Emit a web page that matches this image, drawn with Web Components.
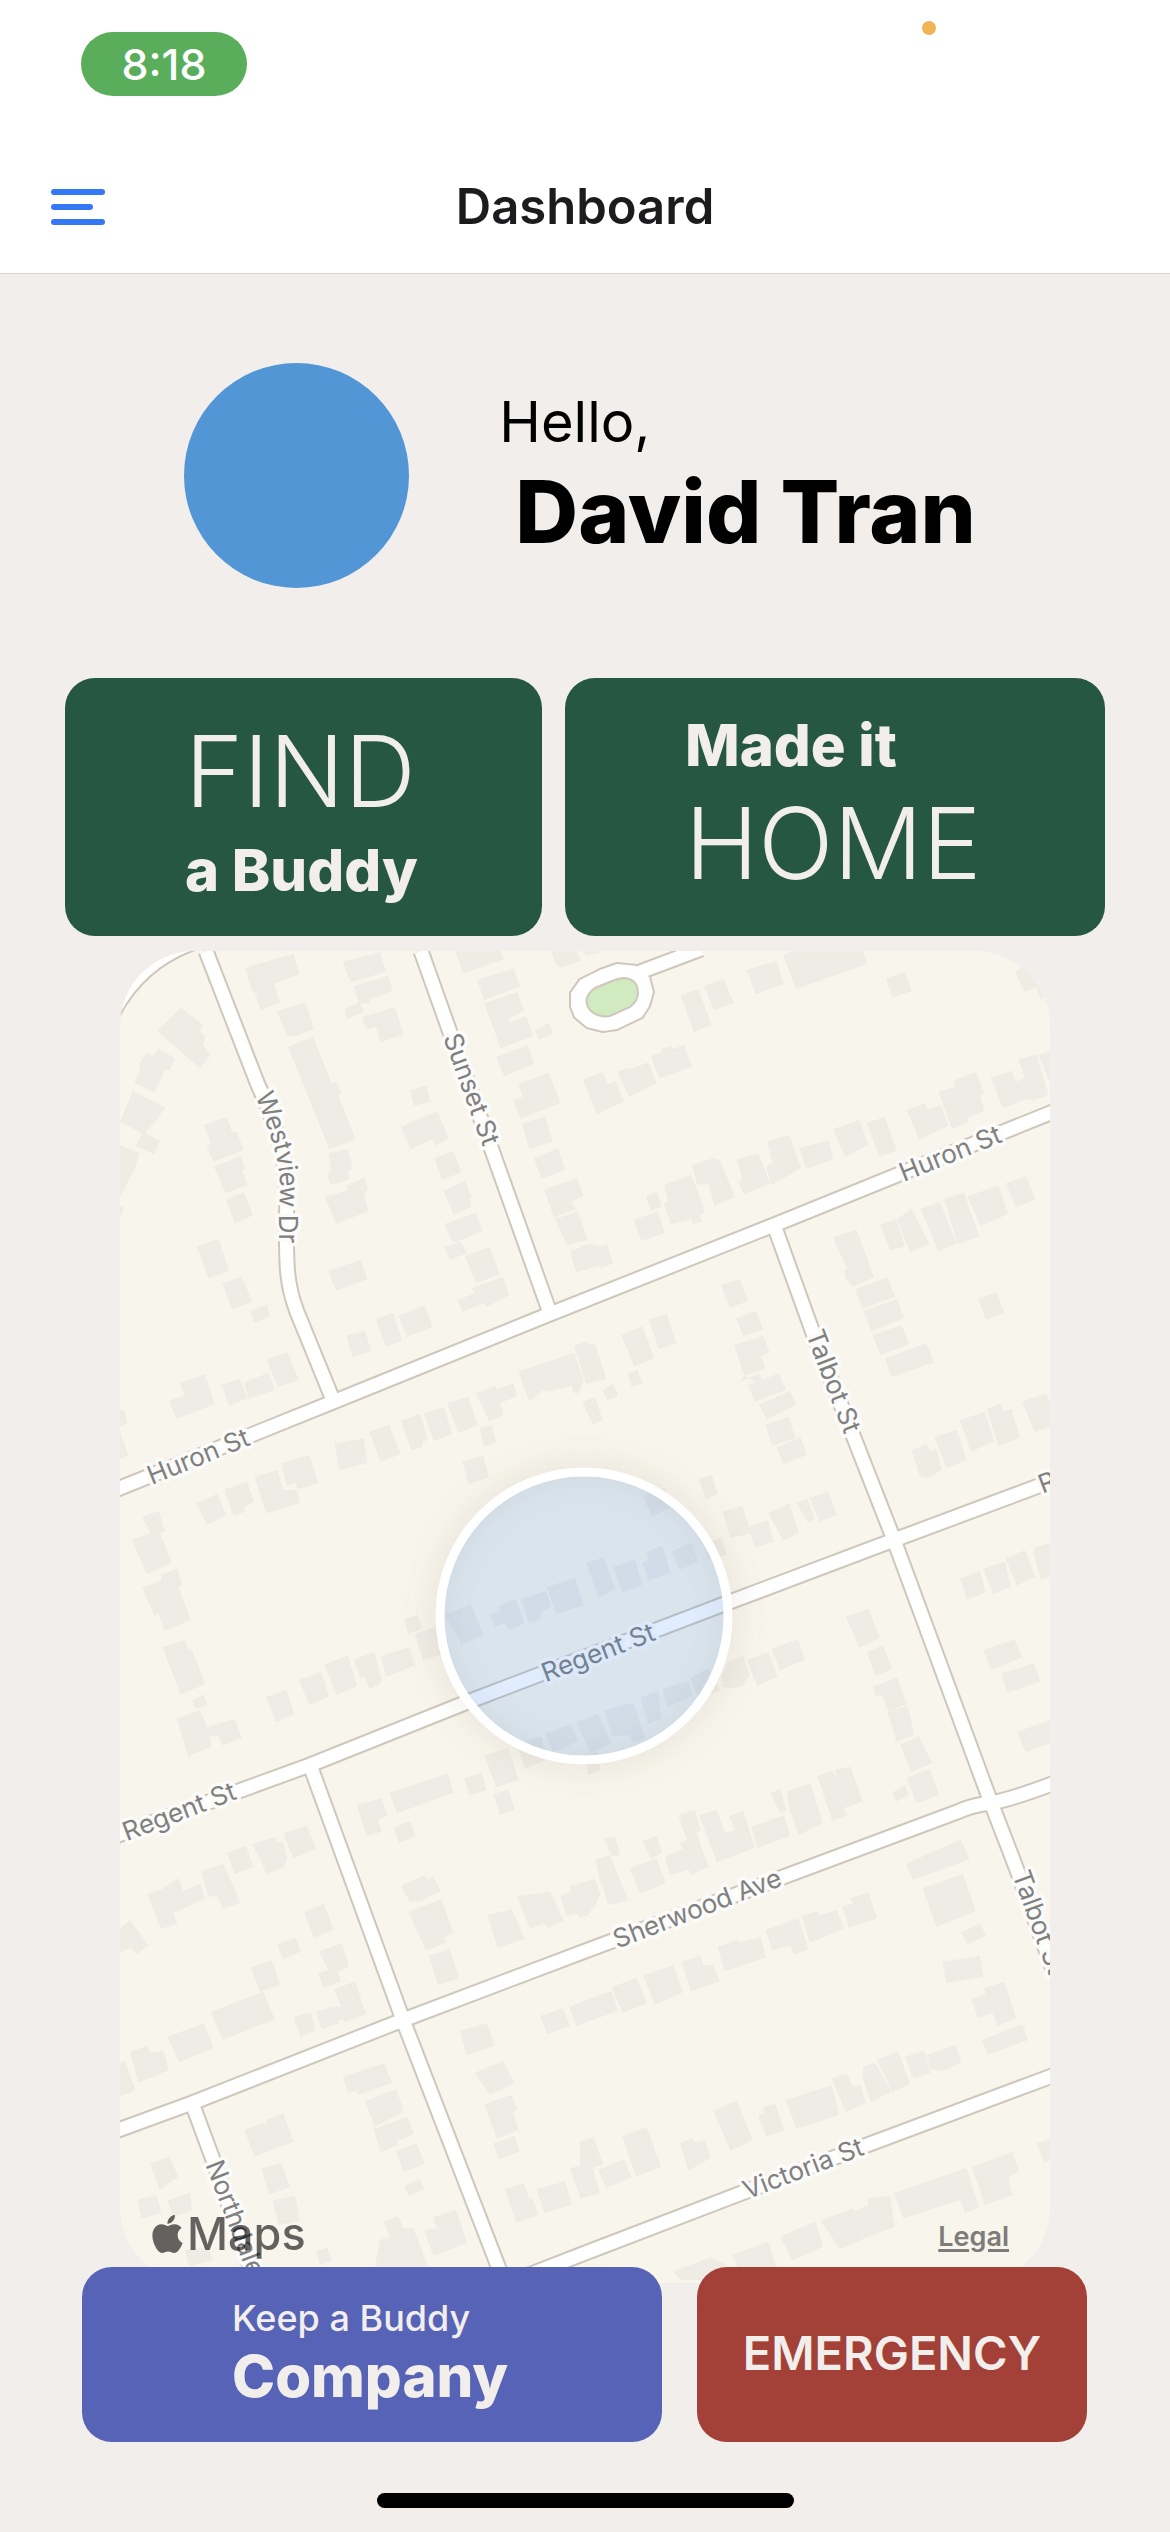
<!DOCTYPE html>
<html lang="en">
<head>
<meta charset="utf-8">
<meta name="viewport" content="width=device-width, initial-scale=1">
<title>Dashboard</title>
<style>
  body {
    margin: 0;
    background: #f1eeeb;
    font-family: Inter, Roboto, "Liberation Sans", sans-serif;
  }
</style>
</head>
<body>
<buddy-dashboard></buddy-dashboard>

<script>
// Status bar with the clock pill and the microphone dot
class StatusBar extends HTMLElement {
  constructor () {
    super()
    this.attachShadow({ mode: 'open' })
  }

  static Styles = /* Css */`
    :host {
      display: flex;
      justify-content: space-between;
      height: 141px;
      padding: 0 234px 0 81px;
    }
    time {
      width: 166px;
      height: 64px;
      margin-top: 32px;
      border-radius: 32px;
      background: #5aae5b;
      color: #fff;
      font-size: 43px;
      line-height: 64px;
      font-weight: 500;
      text-align: center;
    }
    i {
      width: 14px;
      height: 14px;
      margin-top: 21px;
      border-radius: 50%;
      background: #f1b354;
    }
  `

  connectedCallback () {
    this.shadowRoot.innerHTML = /* HTML */`
      <style>${StatusBar.Styles}</style>
      <time><slot></slot></time>
      <i></i>
    `
  }
}

// Title bar with the drawer button
class NavBar extends HTMLElement {
  constructor () {
    super()
    this.attachShadow({ mode: 'open' })
  }

  static Styles = /* Css */`
    :host {
      display: grid;
      grid-template-columns: 1fr auto 1fr;
      align-items: center;
      height: 132px;
      padding: 0 51px;
      border-bottom: 1px solid #d8d8d8;
    }
    button {
      justify-self: start;
      padding: 0;
      border: 0;
      background: none;
    }
    svg {
      display: block;
    }
    h1 {
      margin: 0;
      color: #1c1c1e;
      font-size: 49px;
      line-height: 60px;
      font-weight: 600;
    }
  `

  connectedCallback () {
    this.shadowRoot.innerHTML = /* HTML */`
      <style>${NavBar.Styles}</style>
      <button type="button" aria-label="Menu">
        <svg width="54" height="36" viewBox="0 0 54 36" stroke="#3478f6" stroke-width="6" stroke-linecap="round">
          <path d="M3 3H51M3 18H39M3 33H51"/>
        </svg>
      </button>
      <h1><slot></slot></h1>
    `
  }
}

class UserGreeting extends HTMLElement {
  constructor () {
    super()
    this.attachShadow({ mode: 'open' })
  }

  static Styles = /* Css */`
    :host {
      display: flex;
      justify-content: center;
      align-items: center;
      gap: 90px;
      padding: 89px 70px 90px 60px;
    }
    .avatar {
      width: 225px;
      height: 225px;
      border-radius: 50%;
      background: #5296d5;
    }
    p {
      margin: 0;
      color: #000;
    }
    .hello {
      font-size: 56px;
      line-height: 72px;
    }
    .name {
      padding-left: 16px;
      font-size: 87px;
      line-height: 107px;
      font-weight: 800;
    }
  `

  connectedCallback () {
    this.shadowRoot.innerHTML = /* HTML */`
      <style>${UserGreeting.Styles}</style>
      <div class="avatar"></div>
      <div>
        <p class="hello">Hello,</p>
        <p class="name"><slot></slot></p>
      </div>
    `
  }
}

// Two line button, each line goes in its own slot child
class ActionButton extends HTMLElement {
  constructor () {
    super()
    this.attachShadow({ mode: 'open' })
  }

  static Styles = /* Css */`
    :host {
      display: grid;
    }
    button {
      display: flex;
      flex-direction: column;
      justify-content: center;
      align-items: flex-start;
      padding: 0 0 0 var(--inset, 120px);
      border: 0;
      border-radius: 30px;
      background: var(--tone, #265742);
      color: #f1eeeb;
      font: inherit;
      text-align: left;
      white-space: nowrap;
    }
    :host([centered]) button {
      align-items: center;
      padding: 0 0 4px;
    }
    ::slotted(span) {
      display: block;
    }
    ::slotted(.big) {
      font-size: 99px;
      line-height: 125px;
      font-weight: 350;
    }
    ::slotted(.bold) {
      font-size: 58px;
      line-height: 72px;
      font-weight: 800;
    }
    ::slotted(.small) {
      font-size: 36px;
      line-height: 43px;
      font-weight: 500;
    }
    ::slotted(.alert) {
      font-size: 47px;
      line-height: 56px;
      font-weight: 600;
    }
  `

  connectedCallback () {
    this.shadowRoot.innerHTML = /* HTML */`
      <style>${ActionButton.Styles}</style>
      <button type="button"><slot></slot></button>
    `
  }
}

// Houses, grouped by map tile. Tile units are a third of a map unit.
const TILES = [
  [120, 940, `
    375,83 520,42 538,102 462,132 480,188 422,210 405,160 395,150|668,65 780,37 798,95 692,127|
    700,138 803,108 818,152 750,178 748,192 722,190 732,215 682,236 674,208 716,188|470,213 558,188 581,268 527,288 500,285|
    726,232 825,200 851,283 782,306 768,262 738,268|504,320 580,291 636,432 650,423 665,458 655,465 707,597 628,628|
    112,273 182,203 250,255 240,275 255,288 250,315 273,345 240,385|78,338 100,348 115,326 166,355 150,392 135,390 103,458 43,428 62,385 55,378|
    0,545 38,453 136,502 105,547 74,580 120,602 102,643 48,618 66,580|0,615 60,640 42,690 0,770|0,800 12,802 0,832|
    252,555 320,530 336,576 350,575 372,630 280,666 260,615 272,608|282,680 362,648 375,685 366,690 383,735 316,760|
    317,778 372,757 399,826 345,850|230,918 296,897 328,992 266,1015|306,1030 365,1010 397,1085 337,1108|390,1113 440,1094 452,1130 402,1148|
    625,640 683,626 700,688 684,695 687,720 632,735 621,702 634,695|615,770 685,750 678,737 733,714 745,750 732,760 745,813 648,852|
    625,993 722,959 742,1017 648,1052|768,1137 820,1118 847,1202 797,1220|835,1127 914,1096 938,1160 862,1190|679,1187 735,1172 754,1233 698,1250|
    440,1258 502,1236 537,1320 473,1342|870,450 920,437 931,485 882,498|843,560 952,514 986,595 948,617 938,598 872,627|
    943,655 1000,632 1025,697 967,719|970,752 1035,722 1056,772 1048,778 1055,800 1002,826|973,852 1068,818 1088,872 1000,910|
    972,922 1024,905 1040,940 990,960|1035,948 1108,921 1140,1003 1068,1030|1012,1080 1065,1060 1055,1045 1148,1010 1168,1066 1100,1100 1092,1088 1028,1116|
    1005,33 1140,33 1152,57 1030,100|1292,33 1368,33 1384,62 1325,82 1310,78|1385,33 1440,33 1440,40 1400,46|
    1071,120 1182,85 1200,140 1093,180|1093,190 1192,156 1213,212 1168,235 1170,246 1218,228 1240,288 1142,325|
    1246,270 1286,250 1300,280 1256,299|1128,352 1222,316 1243,370 1153,409|1195,432 1286,398 1322,488 1203,536 1178,480 1208,470|
    1206,550 1275,530 1298,605 1228,626|1242,655 1315,624 1335,690 1264,716|1273,750 1370,713 1390,768 1355,785 1367,808 1302,832|
    1305,836 1375,816 1402,897 1342,918|1352,932 1415,913 1440,920 1440,975 1370,997 1358,965`],
  [580, 940, `
    500,90 590,62 612,132 527,163|302,167 355,147 395,255 342,276|372,137 432,118 462,190 402,211|610,45 640,33 850,33 863,72 648,147|
    918,115 975,96 995,153 936,173|1305,93 1328,83 1355,110 1395,170 1383,180 1370,142 1333,155|8,418 70,397 83,432 107,424 133,485 50,522|
    112,395 145,383 150,388 205,367 230,430 148,471|213,348 250,335 243,328 272,317 278,328 312,315 337,380 238,415|
    760,567 838,540 866,615 795,650|860,548 915,532 950,632 898,650|658,625 745,600 760,658 680,687|
    562,605 628,585 663,685 575,735 558,680 578,668|470,658 536,640 570,730 492,765 475,725 488,718|
    336,675 400,655 420,660 465,772 403,797 385,730 352,735|252,735 335,706 375,815 360,825 365,845 340,853 335,838 272,853 252,790 265,785|
    197,768 232,757 246,800 212,812|161,838 235,816 254,880 183,903|980,510 1035,490 1042,510 1082,495 1106,557 1018,599|
    1075,455 1128,440 1168,547 1117,568|1120,422 1188,396 1213,458 1200,468 1213,512 1165,535|
    1232,412 1296,392 1308,425 1335,413 1315,358 1370,342 1405,465 1358,482 1350,475 1268,503|1375,345 1410,333 1410,430|
    1278,730 1338,709 1366,778 1308,803|1162,770 1255,735 1285,822 1202,858|1093,777 1152,758 1198,890 1133,913|1022,806 1080,787 1130,910 1076,935|
    950,838 995,806 1048,912 990,937|900,855 948,838 975,918 932,932|762,890 830,870 882,1012 820,1040 798,1020 792,992 803,985 765,910|
    826,1048 922,1012 945,1070 848,1106|850,1113 952,1077 972,1135 875,1174|877,1185 965,1156 987,1213 902,1246|915,1255 1040,1209 1061,1268 935,1311|
    1195,1077 1250,1056 1273,1118 1218,1139|422,1035 480,1018 504,1083 450,1104|468,1135 528,1112 549,1168 490,1189|
    463,1215 550,1188 568,1235 543,1250 557,1285 493,1308|480,1325 540,1300 557,1345 493,1307|124,1185 187,1159 223,1255 163,1279|
    207,1138 260,1123 289,1210 236,1228|0,1210 45,1215 78,1310 18,1328 0,1270|0,735 8,770 0,775|0,835 22,900 0,905|
    0,918 30,913 35,925 82,913 99,970 62,986 50,965 20,990 0,985|143,1300 172,1290 188,1330 155,1342`],
  [120, 1360, `
    148,122 195,105 180,68 255,43 285,133 168,176|305,75 360,56 382,115 328,137|372,68 445,38 465,90 385,117|0,150 12,150 22,190 0,200|
    0,215 25,285 0,298|227,430 293,401 318,465 262,494|314,388 382,365 402,425 370,440 376,455 340,468|
    404,350 472,331 490,390 530,390 540,430 438,460|485,310 568,285 595,368 535,388 525,370 500,378|644,250 732,235 743,310 658,329|
    748,215 808,194 842,282 782,306|842,182 900,162 924,238 906,250 908,262 874,271|912,162 972,140 996,222 942,243|982,130 1045,110 1073,195 1015,219|
    1067,100 1125,78 1132,88 1180,70 1192,108 1140,130 1150,165 1108,183|1080,205 1115,195 1128,245 1092,260|1027,305 1090,288 1107,352 1046,372|
    1195,35 1362,-22 1392,62 1375,100 1360,98 1355,78 1278,95 1270,90 1228,125|1362,-42 1398,-55 1405,-42 1425,-48 1456,58 1400,72|1387,125 1425,112 1448,180 1420,196|
    66,470 118,453 135,515 95,525|36,540 88,520 118,515 156,610 80,642|
    122,645 172,625 188,675 175,680 212,780 135,812 115,762 103,768 67,683 125,660|128,862 193,841 205,868 215,866 256,973 182,1003|
    217,1022 250,1003 261,1034 228,1047|170,1075 240,1050 262,1102 345,1076 365,1135 308,1157 295,1128 268,1130 275,1160 205,1189|
    438,1010 500,990 523,1062 468,1087|537,960 605,936 627,1010 568,1034|613,912 683,888 712,978 650,1006|
    700,898 762,877 786,958 780,972 748,988 735,952 722,953|782,888 868,862 884,918 798,950|852,778 893,764 906,805 866,822|
    885,822 950,798 980,880 910,900|975,765 1052,732 1091,825 1025,853|1111,765 1140,752 1138,738 1188,717 1213,790 1168,811 1155,790 1125,800|
    1203,718 1278,692 1294,740 1262,760 1265,775 1228,790|1280,682 1365,653 1392,735 1310,763|1275,1120 1355,1092 1375,1145 1300,1175|
    1370,1085 1435,1062 1475,1150 1410,1180|1094,1185 1165,1163 1195,1260 1128,1283|1190,1150 1265,1130 1278,1200 1215,1227|1032,1255 1085,1238 1100,1290 1048,1307`],
  [580, 1360, `
    503,75 598,40 617,90 525,125|537,133 630,93 648,135 560,178|555,195 625,170 647,235 577,257|590,262 662,232 680,285 610,311|
    68,90 100,72 115,108 82,122|357,358 395,343 414,402 378,418|190,408 255,385 275,440 215,470|
    427,455 487,437 508,500 565,480 580,545 525,565 510,520 452,535|565,460 627,430 658,518 610,542|650,430 682,416 705,478 683,487|
    690,413 745,394 770,465 718,485|995,270 1040,253 1050,272 1070,270 1085,330 1040,355 1020,350|1063,232 1130,209 1161,300 1100,324|
    1140,180 1215,155 1243,245 1172,275|1220,148 1260,130 1270,152 1295,147 1320,233 1255,258|1326,125 1398,100 1410,130 1410,200 1365,217|
    1140,655 1200,634 1217,698 1160,719|1210,628 1275,604 1293,680 1240,703|1277,595 1335,570 1367,650 1310,677|
    1360,578 1367,562 1410,548 1410,650 1383,660|798,770 865,746 900,835 838,863|860,875 910,857 935,928 885,948|
    880,978 952,953 980,1033 925,1053 905,1005 888,1008|922,1055 983,1037 1003,1125 950,1145|960,1153 1018,1130 1057,1210 993,1237|
    980,1253 1050,1228 1078,1306 1010,1330|937,1298 975,1275 988,1305 950,1325|1210,870 1305,838 1327,893 1232,929|
    1265,940 1362,910 1381,965 1282,998|1312,1115 1410,1080 1410,1150 1337,1177|18,608 72,592 106,688 56,713|100,622 165,598 187,675 127,698|
    187,608 205,600 200,575 247,555 272,638 205,662|275,575 335,547 354,605 298,630|375,555 425,530 438,585 385,600|575,865 655,838 674,900 600,930|
    500,900 565,877 593,950 532,978|445,905 490,887 508,945 490,975 460,985 430,980 425,945|330,955 385,925 420,990 358,1018|
    247,988 325,963 337,1008 262,1042|180,1012 235,993 245,1075 205,1092|73,1050 160,1028 195,1135 160,1150 145,1125 95,1128|15,1190 50,1175 62,1230 25,1245`],
  [120, 1780, `
    808,38 985,-20 1000,38 832,100|0,445 30,420 85,495 50,523 32,503 0,518|83,342 125,328 175,295 190,332 240,312 256,355 160,400 172,432 122,446|
    244,272 310,252 362,368 310,386 292,348 265,350|320,218 378,198 400,260 344,282|395,193 465,170 472,188 490,185 502,238 490,262 438,281 425,245|
    490,160 560,136 588,208 520,235|552,395 612,372 641,450 582,473|472,492 528,473 542,515 488,538|392,562 455,540 480,615 420,635|
    597,515 665,490 688,560 655,575 662,605 610,624 595,580 625,570|272,695 430,635 465,718 308,780|143,770 252,730 281,803 177,847|
    520,712 573,696 587,752 542,770|588,695 635,680 665,680 642,628 705,604 738,702 680,725 655,718 658,730 605,748|
    30,815 80,798 90,818 130,812 147,870 55,908|0,850 15,842 46,930 0,950|710,75 785,55 802,105 775,120 785,155 740,167|820,142 870,124 888,170 838,188|
    1120,42 1165,30 1185,90 1140,106|843,318 910,286 925,300 940,287 961,333 905,362 870,367|865,395 965,357 1000,460 970,472 980,488 918,512|
    925,527 988,507 1018,595 955,615|1103,405 1175,387 1215,478 1132,502|1190,348 1290,335 1333,422 1285,443 1275,430 1230,445|
    1322,348 1350,335 1350,318 1425,297 1440,340 1425,380 1380,413 1370,400 1338,408|1430,240 1470,225 1490,290 1440,310|668,890 792,850 816,910 713,945 710,932 685,938|
    735,962 828,928 850,985 843,1000 765,1040|760,1047 862,1010 881,1062 830,1085 833,1095 782,1117|828,1112 890,1090 915,1152 850,1175|
    853,1218 900,1197 911,1228 866,1247|373,1050 435,1028 440,1040 440,1020 490,1000 520,1085 403,1130|425,1165 485,1150 510,1222 447,1243|
    457,1262 525,1247 540,1322 475,1335|90,1150 150,1130 155,1145 175,1190 118,1230|52,1260 110,1245 125,1298 65,1316|142,1262 210,1238 216,1290 160,1312|
    195,1410 262,1400 280,1440 208,1460|588,1415 622,1402 636,1442 600,1456|1020,752 1102,730 1123,797 1040,826|
    1063,878 1152,842 1183,912 1110,944|1093,972 1175,945 1192,985 1180,1000 1197,1050 1130,1076|1120,1090 1185,1068 1198,1115 1137,1138|
    1155,1228 1212,1210 1228,1258 1240,1258 1255,1305 1190,1330|1250,1228 1335,1204 1357,1273 1273,1300|1260,708 1330,685 1350,738 1282,763|
    1347,680 1475,632 1494,692 1370,738|1380,1090 1420,1073 1445,1150 1412,1168|1350,1165 1415,1150 1440,1240 1382,1256|
    912,1350 950,1345 938,1312 1008,1290 1042,1390 940,1427|790,1325 835,1308 850,1345 880,1345 925,1460 765,1460 780,1380 810,1370`],
  [580, 1780, `
    570,40 600,27 620,90 602,100|620,35 692,10 728,130 655,165 630,90|712,-12 755,-28 772,-5 765,-30 812,-40 848,65 790,85 803,105 757,122|
    72,178 105,170 121,225 97,230|187,182 230,167 245,218 213,236|45,240 90,225 145,360 85,375|150,265 230,235 257,310 180,340|
    255,230 310,205 295,190 320,180 295,105 345,90 362,150 350,160 385,260 335,285 325,270 270,285|358,105 410,90 435,160 465,150 448,108 490,92 525,205 410,246|
    515,140 613,105 630,168 532,203|0,310 45,297 60,345 25,405 0,413|977,252 1143,178 1168,238 1000,300|1028,325 1148,283 1188,392 1070,440|
    1142,458 1200,430 1218,467 1162,493|1087,545 1200,527 1211,590 1100,610|1175,658 1218,640 1212,625 1273,605 1309,715 1252,738 1238,700 1193,713|
    1205,780 1328,733 1344,780 1224,824|787,380 820,370 812,355 865,337 892,415 807,443|665,408 710,393 720,405 770,390 792,445 690,490|
    557,450 655,415 685,508 643,525 630,495 577,513|413,500 470,480 478,488 543,470 558,533 433,573|305,545 360,527 370,555 400,555 420,603 333,635|
    190,587 280,555 309,637 225,674|95,622 170,593 202,670 127,700|400,992 470,962 518,1080 452,1113|534,1008 552,998 548,983 585,970 612,1050 560,1070|
    618,960 755,915 778,1005 650,1048|755,895 800,880 820,920 842,915 858,968 797,996|850,860 885,848 935,935 872,966 848,895|
    890,838 955,815 990,912 937,935|975,830 1033,812 1052,880 1000,895|1040,825 1127,795 1145,848 1090,872 1052,868|127,1068 200,1042 243,1160 168,1190|
    300,1088 340,1074 345,1088 375,1080 391,1133 325,1173|0,1085 40,1072 70,1155 35,1160 55,1235 0,1255|55,1170 132,1138 155,1193 78,1223|
    1175,1160 1298,1116 1317,1175 1285,1190 1297,1245 1215,1275|942,1240 1160,1163 1197,1283 1157,1300 1140,1260 970,1316|
    825,1295 865,1275 862,1255 930,1248 945,1340 855,1375|722,1322 820,1285 855,1375 780,1408|600,1370 705,1325 730,1400 637,1442|
    455,1425 565,1385 588,1460 480,1475|280,1475 390,1432 450,1460 450,1500 300,1500|1370,1090 1410,1077 1410,1140 1393,1148`]
]

const ROADS = [
  'M206 951L258 1085C284 1140 288 1175 286.500 1215C286 1270 287 1285 297 1312L333 1400',
  'M421 951L550 1313',
  'M110 1492L333 1402L550 1314L774 1225L1060 1109',
  'M774 1225L813 1333L894 1540L990 1800L1017 1870L1054 1972',
  'M110 1838L310 1765L470 1701L727 1603L894 1540L1060 1478',
  'M310 1765L403 2020L508 2292',
  'M110 2133L192 2103L403 2020L580 1953L957 1812Q973 1805 990 1803Q1010 1800 1060 1781',
  'M192 2103L212 2157L256 2283',
  'M490 2290L580 2255L867 2145L1060 2073',
  'M640 972L701 949'
]

// text, x, y, angle, anchor
const LABELS = [
  ['Huron St', 950, 1153, -22, 'middle'],
  ['Huron St', 198, 1456, -22, 'middle'],
  ['Regent St', 179, 1811, -21, 'middle'],
  ['Regent St', 598, 1652, -21, 'middle'],
  ['Regent St', 1039, 1485, -21, 'start'],
  ['Sherwood Ave', 697, 1908, -21, 'middle'],
  ['Victoria St', 803, 2168, -21, 'middle'],
  ['Talbot St', 834, 1381, 69, 'middle'],
  ['Talbot St', 1021, 1871, 70, 'start'],
  ['Sunset St', 472, 1089, 70, 'middle'],
  ['Northdale', 214, 2161, 69, 'start']
]

class BuddyMap extends HTMLElement {
  constructor () {
    super()
    this.attachShadow({ mode: 'open' })
  }

  static Styles = /* Css */`
    :host {
      display: block;
      position: relative;
      overflow: hidden;
      border-radius: 75px;
      background: #f8f5ec;
    }
    .map {
      display: block;
      width: 100%;
      height: 100%;
    }
    .label {
      font-size: 26px;
      fill: #808080;
      stroke: #fbfbfa;
      stroke-width: 7px;
      stroke-linejoin: round;
      paint-order: stroke;
      dominant-baseline: central;
    }
    .brand, a {
      position: absolute;
      bottom: 29px;
    }
    .brand {
      left: 32px;
      display: flex;
      align-items: center;
      gap: 4px;
      color: #000;
      opacity: 0.6;
      font-size: 45px;
      line-height: 40px;
      font-weight: 500;
    }
    .brand svg {
      width: 31px;
      height: 38px;
    }
    a {
      right: 41px;
      color: #7e7c78;
      font-size: 27px;
      line-height: 34px;
      font-weight: 600;
      text-decoration-thickness: 3px;
      text-underline-offset: 3px;
    }
  `

  houses () {
    return TILES.map(([x, y, list]) => `
      <g transform="translate(${x} ${y}) scale(0.3333)">
        ${list.split('|').map(points => `<polygon points="${points.trim()}"/>`).join('')}
      </g>`).join('')
  }

  labels () {
    return LABELS.map(([text, x, y, angle, anchor]) =>
      `<text class="label" text-anchor="${anchor}" transform="translate(${x} ${y}) rotate(${angle})">${text}</text>`
    ).join('')
  }

  connectedCallback () {
    const roads = ROADS.join('')
    const loop = 'M600 970L617 964L637 966L649 977L653 992L649 1006L642 1017L617 1029L603 1031L587 1027L575 1017L571 1007L571 993L580 980Z'
    this.shadowRoot.innerHTML = /* HTML */`
      <style>${BuddyMap.Styles}</style>
      <svg class="map" viewBox="120 951 930 1332" preserveAspectRatio="xMidYMid slice">
        <defs>
          <filter id="glow" x="-30%" y="-30%" width="160%" height="160%">
            <feGaussianBlur stdDeviation="14"/>
          </filter>
          <path id="westview" d="M261 1085C286 1140 293 1175 289 1205V1290"/>
        </defs>
        <g fill="#efece5">${this.houses()}</g>
        <g fill="none" stroke="#cfc7bc" stroke-width="17">
          <path d="${roads}"/>
          <path d="${loop}" stroke-width="4" stroke-linejoin="round"/>
        </g>
        <path d="${roads}" fill="none" stroke="#fff" stroke-width="13"/>
        <path d="${loop}" fill="#fff"/>
        <path d="M595 988L612 981Q628 974 636 984Q642 998 630 1007L610 1016Q598 1018 590 1010Q581 998 595 988Z" fill="#d1eac0" stroke="#cfc7bc" stroke-width="2"/>
        <path d="M193 950Q144 968 119 1017V950Z" fill="#fff"/>
        <path d="M195 950Q145 968 119 1017" fill="none" stroke="#cfc7bc" stroke-width="2"/>
        ${this.labels()}
        <text class="label"><textPath href="#westview" startOffset="8">Westview Dr</textPath></text>
        <circle cx="584" cy="1616" r="146" fill="none" stroke="#7d7864" stroke-opacity="0.14" stroke-width="18" filter="url(#glow)"/>
        <circle cx="584" cy="1616" r="144" fill="#3087f8" fill-opacity="0.15" stroke="#fff" stroke-width="9"/>
      </svg>
      <div class="brand">
        <svg viewBox="2 0 20 24" preserveAspectRatio="none" fill="currentColor">
          <path d="M12.152 6.896c-.948 0-2.415-1.078-3.96-1.04-2.04.027-3.91 1.183-4.961 3.014-2.117 3.675-.546 9.103 1.519 12.09 1.013 1.454 2.208 3.09 3.792 3.039 1.52-.065 2.09-.987 3.935-.987 1.831 0 2.35.987 3.96.948 1.637-.026 2.676-1.48 3.676-2.948 1.156-1.688 1.636-3.325 1.662-3.415-.039-.013-3.182-1.221-3.22-4.857-.026-3.04 2.48-4.494 2.597-4.559-1.429-2.09-3.623-2.324-4.39-2.376-2-.156-3.675 1.09-4.61 1.09zM15.53 3.83c.843-1.012 1.4-2.427 1.245-3.83-1.207.052-2.662.805-3.532 1.818-.78.896-1.454 2.338-1.273 3.714 1.338.104 2.715-.688 3.559-1.701"/>
        </svg>
        <span>Maps</span>
      </div>
      <a href="#legal">Legal</a>
    `
  }
}

class BuddyDashboard extends HTMLElement {
  constructor () {
    super()
    this.attachShadow({ mode: 'open' })
  }

  static Styles = /* Css */`
    :host {
      display: flex;
      flex-direction: column;
      min-height: 100vh;
    }
    header {
      background: #fff;
    }
    main {
      flex: 1;
      display: flex;
      flex-direction: column;
    }
    .top {
      display: grid;
      grid-template-columns: 477fr 540fr;
      grid-auto-rows: 258px;
      gap: 23px;
      padding: 0 65px;
    }
    buddy-map {
      flex: 1 0 900px;
      margin: 15px 120px 0;
    }
    /* the lower buttons lie over the edge of the map */
    .bottom {
      position: relative;
      display: grid;
      grid-template-columns: 580fr 390fr;
      grid-auto-rows: 175px;
      gap: 35px;
      margin-top: -16px;
      padding: 0 83px 0 82px;
    }
    .company {
      --tone: #5663b6;
      --inset: 150px;
    }
    .emergency {
      --tone: #a34138;
    }
    footer {
      display: flex;
      justify-content: center;
      padding: 51px 0 24px;
    }
    footer i {
      width: 417px;
      height: 15px;
      border-radius: 8px;
      background: #000;
    }
  `

  connectedCallback () {
    this.shadowRoot.innerHTML = /* HTML */`
      <style>${BuddyDashboard.Styles}</style>
      <header>
        <status-bar>8:18</status-bar>
        <nav-bar>Dashboard</nav-bar>
      </header>
      <main>
        <user-greeting>David Tran</user-greeting>
        <div class="top">
          <action-button>
            <span class="big">FIND</span>
            <span class="bold">a Buddy</span>
          </action-button>
          <action-button>
            <span class="bold">Made it</span>
            <span class="big">HOME</span>
          </action-button>
        </div>
        <buddy-map></buddy-map>
        <div class="bottom">
          <action-button class="company">
            <span class="small">Keep a Buddy</span>
            <span class="bold">Company</span>
          </action-button>
          <action-button class="emergency" centered>
            <span class="alert">EMERGENCY</span>
          </action-button>
        </div>
      </main>
      <footer><i></i></footer>
    `
  }
}

customElements.define('status-bar', StatusBar)
customElements.define('nav-bar', NavBar)
customElements.define('user-greeting', UserGreeting)
customElements.define('action-button', ActionButton)
customElements.define('buddy-map', BuddyMap)
customElements.define('buddy-dashboard', BuddyDashboard)
</script>
</body>
</html>
